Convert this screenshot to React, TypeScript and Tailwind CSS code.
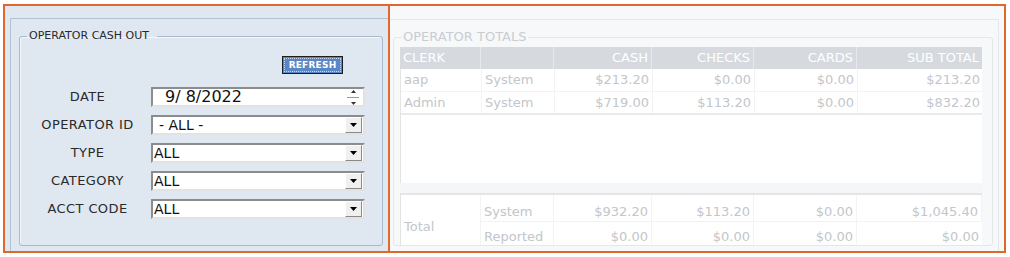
import React from 'react';

const fields = [
    { label: 'OPERATOR ID', value: '- ALL -', pad: 'pl-[6px]' },
    { label: 'TYPE', value: 'ALL', pad: 'pl-[1px]' },
    { label: 'CATEGORY', value: 'ALL', pad: 'pl-[1px]' },
    { label: 'ACCT CODE', value: 'ALL', pad: 'pl-[1px]' },
];

const rows = [
    ['aap', 'System', '$213.20', '$0.00', '$0.00', '$213.20'],
    ['Admin', 'System', '$719.00', '$113.20', '$0.00', '$832.20'],
];

const cols = 'grid grid-cols-[81px_73px_98px_102px_103px_125px]';

function DropArrow() {
    return (
        <div className="w-[17px] h-[16px] bg-[#f0f0f0] border border-t-white border-l-white border-r-[#8a8a8a] border-b-[#8a8a8a] flex items-center justify-center">
            <svg width="7" height="4" viewBox="0 0 7 4">
                <path d="M0 0h7L3.5 4z" fill="#000" />
            </svg>
        </div>
    );
}

function Spinner() {
    return (
        <div className="w-[14px] h-[15px] mr-[2px] flex flex-col items-center justify-between">
            <svg width="5" height="3" viewBox="0 0 5 3"><path d="M2.5 0L5 3H0z" fill="#333" /></svg>
            <div className="w-[12px] h-px bg-[#9a9a9a]" />
            <svg width="5" height="3" viewBox="0 0 5 3"><path d="M0 0h5L2.5 3z" fill="#333" /></svg>
        </div>
    );
}

function Input({ children, right }: { children: React.ReactNode; right: React.ReactNode }) {
    return (
        <div className="w-[214px] h-[20px] bg-white border-2 border-t-[#8c8c8c] border-l-[#8c8c8c] border-r-[#e2e2e2] border-b-[#e2e2e2] flex items-center justify-between pr-[1px]">
            {children}
            {right}
        </div>
    );
}

function CashOut() {
    return (
        <div className="w-[387px] h-[249px] shrink-0 border-2 border-[#e0682c] bg-[#dfe7f1] overflow-hidden">
            <div className="ml-[5px] mt-[12px] h-[260px] border-t border-l border-[#b3c1d4] pl-[8px] pt-[10px]">
                <fieldset className="w-[364px] h-[217px] border border-[#a9b8cc] rounded-[3px] shadow-[inset_1px_1px_0_#f4f7fb]">
                    <legend className="ml-[7px] pl-[2px] pr-[8px] text-[11px] leading-[14px] text-[#2a2a2a]">OPERATOR CASH OUT</legend>
                    <div className="flex justify-end pr-[39px] mt-[13px]">
                        <button className="w-[61px] h-[18px] border border-[#1d1d1d] bg-[#5a86c2] p-[1px]">
                            <div className="h-full border border-dotted border-[#c9d8ee] flex items-center justify-center text-[9px] font-bold text-white leading-none tracking-[0.2px]">
                                REFRESH
                            </div>
                        </button>
                    </div>
                    <div className="mt-[13px] flex flex-col gap-[8px] text-[13px] tracking-[0.4px] text-[#2a2a2a]">
                        <div className="flex items-center">
                            <div className="w-[131px] pl-[4px] text-center">DATE</div>
                            <Input right={<Spinner />}>
                                <span className="pl-[12px] text-[16px] tracking-normal text-[#111]">9/ 8/2022</span>
                            </Input>
                        </div>
                        {fields.map((f) => (
                            <div key={f.label} className="flex items-center">
                                <div className="w-[131px] pl-[4px] text-center">{f.label}</div>
                                <Input right={<DropArrow />}>
                                    <span className={`${f.pad} text-[14px] tracking-normal text-[#111] whitespace-pre`}>{f.value}</span>
                                </Input>
                            </div>
                        ))}
                    </div>
                </fieldset>
            </div>
        </div>
    );
}

function Totals() {
    return (
        <div className="w-[618px] h-[249px] shrink-0 -ml-[2px] border-2 border-[#e0682c] bg-[#f7f8fa] overflow-hidden">
            <div className="mt-[13px] w-[609px] h-[260px] border-t border-r border-[#e4e8ed] pl-[3px] pt-[10px]">
                <fieldset className="w-[600px] h-[216px] border border-[#e4e7eb] rounded-[3px] overflow-hidden">
                    <legend className="ml-[8px] px-[1px] text-[13px] leading-[14px] text-[#c9cdd2]">OPERATOR TOTALS</legend>
                    <div className="ml-[6px] mt-[3px] w-[582px] text-[13px] text-[#c3c6ca]">
                        <div className={`${cols} h-[22px] bg-[#d6dadf] text-white`}>
                            {['CLERK', '', 'CASH', 'CHECKS', 'CARDS', 'SUB TOTAL'].map((h, i) => (
                                <div key={i} className={`flex items-center px-[3px] border-r border-[#e6e9ec] last:border-r-0 ${i > 1 ? 'justify-end' : ''}`}>{h}</div>
                            ))}
                        </div>
                        <div className="bg-white border-l border-[#e2e4e7] h-[114px]">
                            {rows.map((r, ri) => (
                                <div key={ri} className={`${cols} h-[23px] ${ri === 1 ? 'border-b-2 border-[#e9eaec]' : 'border-b border-[#f3f3f4]'}`}>
                                    {r.map((c, i) => (
                                        <div key={i} className={`flex items-center px-[3px] border-r border-[#f3f3f4] last:border-r-0 ${i > 1 ? 'justify-end' : ''}`}>{c}</div>
                                    ))}
                                </div>
                            ))}
                        </div>
                        <div className="h-[10px] bg-[#f4f6f8]" />
                        <div className={`${cols} border-t-2 border-[#e3e5e8] bg-white`}>
                            <div className="row-span-2 flex items-center pt-[10px] px-[3px] border-r border-[#f3f3f4] border-l border-l-[#e2e4e7]">Total</div>
                            {['System', '$932.20', '$113.20', '$0.00', '$1,045.40'].map((c, i) => (
                                <div key={i} className={`flex items-center h-[27px] pt-[8px] px-[3px] border-b border-[#f3f3f4] border-r last:border-r-0 ${i > 0 ? 'justify-end' : ''}`}>{c}</div>
                            ))}
                            {['Reported', '$0.00', '$0.00', '$0.00', '$0.00'].map((c, i) => (
                                <div key={i} className={`flex items-center h-[26px] pt-[4px] px-[3px] border-r border-[#f3f3f4] last:border-r-0 ${i > 0 ? 'justify-end' : ''}`}>{c}</div>
                            ))}
                        </div>
                    </div>
                </fieldset>
            </div>
        </div>
    );
}

export default function App() {
    return (
        <div className="w-[1010px] h-[257px] bg-white pt-[4px] pl-[3px] flex font-['DejaVu_Sans',sans-serif]">
            <CashOut />
            <Totals />
        </div>
    );
}
